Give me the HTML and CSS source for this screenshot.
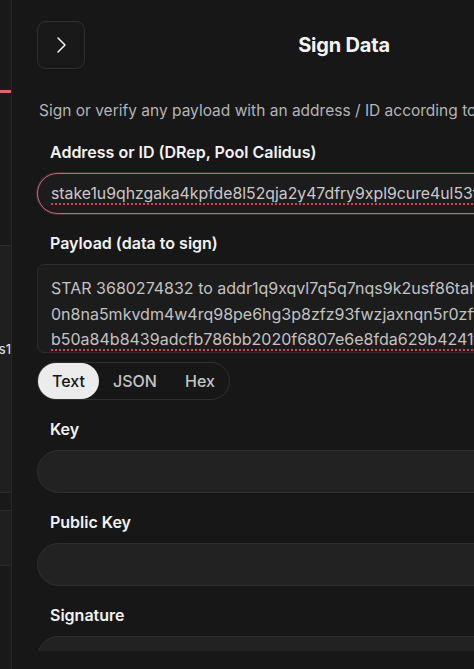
FILE: index.html
```html
<!DOCTYPE html>
<html lang="en">
<head>
<meta charset="utf-8">
<title>Sign Data</title>
<link rel="stylesheet" href="styles.css">
</head>
<body>
<div class="app">
  <aside class="sidebar">
    <div class="side-indicator"></div>
    <div class="side-block side-block-large">
      <div class="side-label"><span>Calidus1</span></div>
    </div>
    <div class="side-block side-block-small"></div>
  </aside>
  <main class="main">
    <header class="header">
      <button class="icon-btn" type="button" aria-label="Expand">
        <svg width="20" height="20" viewBox="0 0 20 20" fill="none" stroke="#f2f2f2" stroke-width="1.5" stroke-linecap="round" stroke-linejoin="round"><polyline points="7,3 14,10 7,17"/></svg>
      </button>
      <h1 class="title">Sign Data</h1>
      <div></div>
    </header>
    <p class="desc">Sign or verify any payload with an address / ID according to CIP-8</p>

    <div class="field">
      <label class="label">Address or ID (DRep, Pool Calidus)</label>
      <div class="input input-active"><span class="spell">stake1u9qhzgaka4kpfde8l52qja2y47dfry9xpl9cure4ul53tzp8wq3sd</span></div>
    </div>

    <div class="field">
      <label class="label">Payload (data to sign)</label>
      <div class="textarea">
        <div class="line">STAR 3680274832 to addr1q9xqvl7q5q7nqs9k2usf86tahq5x</div>
        <div class="line">0n8na5mkvdm4w4rq98pe6hg3p8zfz93fwzjaxnqn5r0zff3pq2x</div>
        <div class="line"><span class="spell">b50a84b8439adcfb786bb2020f6807e6e8fda629b4241f3a9c</span></div>
      </div>
      <div class="segmented">
        <button class="seg seg-text seg-active" type="button">Text</button>
        <button class="seg seg-json" type="button">JSON</button>
        <button class="seg seg-hex" type="button">Hex</button>
      </div>
    </div>

    <div class="field">
      <label class="label">Key</label>
      <div class="input input-empty"></div>
    </div>

    <div class="field">
      <label class="label">Public Key</label>
      <div class="input input-empty"></div>
    </div>

    <div class="field">
      <label class="label">Signature</label>
      <div class="input input-empty"></div>
    </div>
  </main>
</div>
</body>
</html>
```
FILE: styles.css
```css
* { box-sizing: border-box; }
html, body {
  margin: 0;
  padding: 0;
  background: #171717;
  width: 474px;
  height: 669px;
  overflow: hidden;
  font-family: Inter, "Noto Sans", "Liberation Sans", sans-serif;
  color: #f2f2f2;
}
.app {
  display: flex;
  height: 669px;
}
.sidebar {
  flex: 0 0 12px;
  width: 12px;
  height: 669px;
  background: #191919;
  border-right: 1px solid #262626;
  display: flex;
  flex-direction: column;
  overflow: hidden;
}
.side-indicator {
  margin-top: 90px;
  height: 3px;
  background: #e0646f;
}
.side-block {
  background: #1f1f1f;
  border-top: 1px solid #2c2c2c;
  border-bottom: 1px solid #2a2a2a;
}
.side-block-large {
  margin-top: 152px;
  height: 248px;
  padding-top: 94px;
}
.side-block-small {
  margin-top: 17px;
  height: 56px;
}
.side-label {
  display: flex;
  justify-content: flex-end;
  white-space: nowrap;
  font-size: 13px;
  line-height: 18px;
  color: #e8e8e8;
}
.main {
  flex: 0 0 auto;
  width: 640px;
  height: 651px;
  overflow: hidden;
  padding: 21px 0 0 25px;
}
.main > * { width: 614px; }
.header {
  display: grid;
  grid-template-columns: 48px 1fr 48px;
  align-items: center;
  height: 48px;
}
.icon-btn {
  width: 48px;
  height: 48px;
  border: 1px solid #303030;
  border-radius: 9px;
  background: #191919;
  display: flex;
  align-items: center;
  justify-content: center;
  padding: 0;
}
.title {
  margin: 0;
  text-align: center;
  font-size: 20px;
  font-weight: 700;
  letter-spacing: -0.2px;
  color: #f4f4f4;
}
.desc {
  margin: 30px 0 0 2px;
  font-size: 15.5px;
  line-height: 24px;
  color: #b4b4b4;
  white-space: nowrap;
}
.field {
  display: flex;
  flex-direction: column;
  margin-top: 17px;
}
.label {
  display: block;
  padding-left: 13px;
  font-size: 16px;
  line-height: 24px;
  font-weight: 600;
  color: #f2f2f2;
  margin-bottom: 9px;
}
.input {
  height: 41px;
  border-radius: 22px;
  background: #1f1f1f;
  border: 1px solid #2e2e2e;
  padding: 0 13px;
  display: flex;
  align-items: center;
  font-size: 15.8px;
  color: #c9c9c9;
  white-space: nowrap;
  overflow: hidden;
}
.input-active {
  border: 1px solid #c4687c;
  box-shadow: 0 0 0 1px rgba(196, 104, 124, 0.25);
  background: #1c1c1c;
}
.input-empty {
  height: 43px;
  background: #222222;
  border-color: #2f2f2f;
}
.spell {
  text-decoration: underline dotted #d0444e;
  text-decoration-thickness: 1.5px;
  text-underline-offset: 4px;
}
.textarea {
  height: 89px;
  border-radius: 7px;
  background: #1c1c1c;
  border: 1px solid #2c2c2c;
  padding: 11px 13px 0;
  font-size: 16px;
  line-height: 25.5px;
  color: #c2c2c2;
  overflow: hidden;
}
.line { white-space: nowrap; }
.segmented {
  margin-top: 9px;
  width: 193px;
  height: 38px;
  display: flex;
  align-items: center;
  border: 1px solid #2f2f2f;
  border-radius: 19px;
  padding: 0;
}
.seg {
  height: 36px;
  border: none;
  background: transparent;
  font-family: inherit;
  font-size: 16px;
  font-weight: 500;
  color: #c4c4c4;
  border-radius: 18px;
  padding: 0;
}
.seg-text { width: 61px; }
.seg-json { width: 72px; }
.seg-hex { width: 58px; }
.seg-active {
  background: #ececec;
  color: #161616;
}
```
